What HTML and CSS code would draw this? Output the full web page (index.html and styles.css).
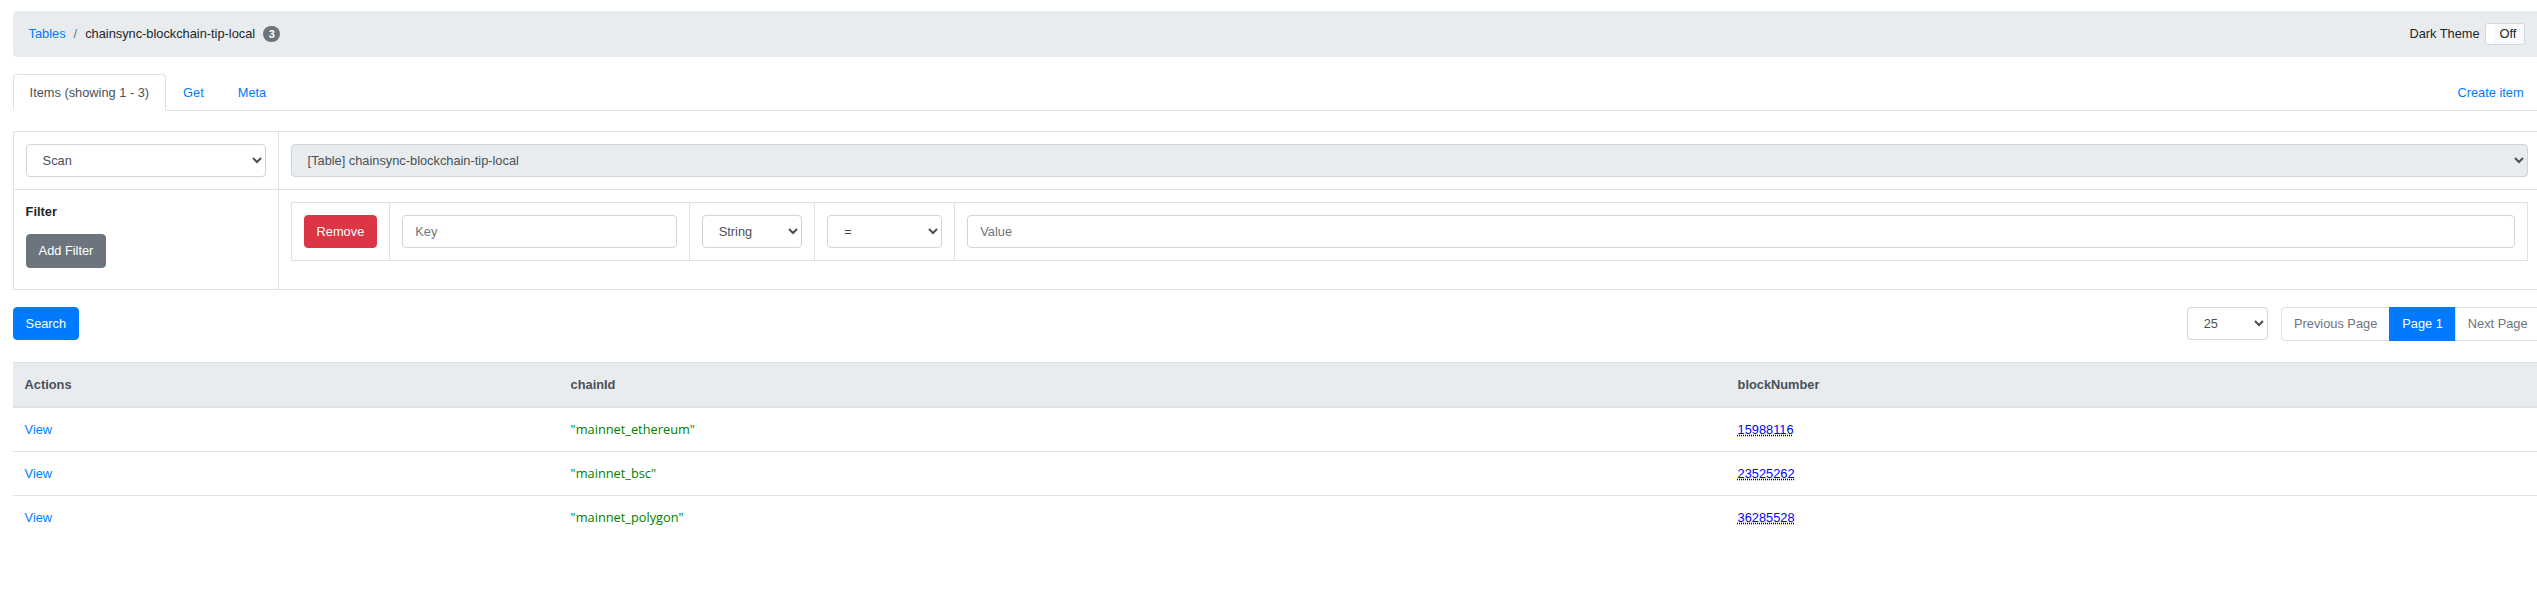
FILE: index.html
```html
<!DOCTYPE html>
<html lang="en">
<head>
<meta charset="utf-8">
<title>chainsync-blockchain-tip-local</title>
<link rel="stylesheet" href="styles.css">
</head>
<body>
<div class="page">
  <nav class="crumbs">
    <div class="crumb-list">
      <a class="crumb-link" href="#">Tables</a>
      <span class="crumb-sep">/</span>
      <span class="crumb-current">chainsync-blockchain-tip-local</span>
      <span class="badge">3</span>
    </div>
    <div class="theme">
      <span class="theme-label">Dark Theme</span>
      <span class="toggle">Off</span>
    </div>
  </nav>

  <div class="tabs">
    <a class="tab tab-active" href="#">Items (showing 1 - 3)</a>
    <a class="tab" href="#">Get</a>
    <a class="tab" href="#">Meta</a>
    <a class="tab tab-create" href="#">Create item</a>
  </div>

  <div class="query">
    <div class="qcell">
      <select class="control">
        <option>Scan</option>
        <option>Query</option>
      </select>
    </div>
    <div class="qcell">
      <select class="control" disabled>
        <option>[Table] chainsync-blockchain-tip-local</option>
      </select>
    </div>
    <div class="qcell">
      <div class="filter-label">Filter</div>
      <button class="btn btn-secondary" type="button">Add Filter</button>
    </div>
    <div class="qcell">
      <div class="filter-row">
        <div class="fcell"><button class="btn btn-danger" type="button">Remove</button></div>
        <div class="fcell"><input class="control key-input" type="text" placeholder="Key"></div>
        <div class="fcell">
          <select class="control type-select"><option>String</option><option>Number</option></select>
        </div>
        <div class="fcell">
          <select class="control op-select"><option>=</option><option>!=</option></select>
        </div>
        <div class="fcell fcell-grow"><input class="control" type="text" placeholder="Value"></div>
      </div>
    </div>
  </div>

  <div class="search-row">
    <button class="btn btn-primary" type="button">Search</button>
    <div class="paging">
      <select class="control page-size"><option>25</option><option>50</option></select>
      <div class="pagination">
        <span class="page-link">Previous Page</span>
        <span class="page-link page-active">Page 1</span>
        <span class="page-link">Next Page</span>
      </div>
    </div>
  </div>

  <table class="items">
    <colgroup>
      <col class="col-actions">
      <col class="col-chain">
      <col>
    </colgroup>
    <thead>
      <tr><th>Actions</th><th>chainId</th><th>blockNumber</th></tr>
    </thead>
    <tbody>
      <tr>
        <td><a href="#">View</a></td>
        <td><span class="v-str">"mainnet_ethereum"</span></td>
        <td><a class="v-num" href="#">15988116</a></td>
      </tr>
      <tr>
        <td><a href="#">View</a></td>
        <td><span class="v-str">"mainnet_bsc"</span></td>
        <td><a class="v-num" href="#">23525262</a></td>
      </tr>
      <tr>
        <td><a href="#">View</a></td>
        <td><span class="v-str">"mainnet_polygon"</span></td>
        <td><a class="v-num" href="#">36285528</a></td>
      </tr>
    </tbody>
  </table>
</div>
</body>
</html>
```

FILE: styles.css
```css
*, *::before, *::after { box-sizing: border-box; }

html, body {
  margin: 0;
  overflow: hidden;
  background: #fff;
}

body {
  font-family: "Liberation Sans", Arial, sans-serif;
  font-size: 12.8px;
  line-height: 1.5;
  color: #212529;
}

a { color: #007bff; text-decoration: none; }

.page {
  width: 2528px;
  margin-left: 12.6px;
  padding-top: 11px;
}

/* breadcrumb */
.crumbs {
  display: flex;
  align-items: center;
  justify-content: space-between;
  background: #e9ecef;
  border-radius: 4px;
  padding: 12px 16px;
  margin-bottom: 16.5px;
}
.crumb-list { display: flex; align-items: center; }
.crumb-sep { color: #6c757d; padding: 0 8px; }
.crumb-current { color: #212529; }
.badge {
  display: inline-block;
  margin-left: 8px;
  background: #6c757d;
  color: #fff;
  font-size: 11px;
  font-weight: 700;
  line-height: 1;
  padding: 2.5px 5.5px;
  border-radius: 10px;
}
.theme { display: flex; align-items: center; gap: 5px; }
.toggle {
  display: flex;
  align-items: center;
  width: 40px;
  height: 22px;
  padding: 0 6px 0 14px;
  border: 1px solid #d3d7db;
  border-radius: 3px;
  background: linear-gradient(to right, #fff 8px, #f8f9fa 8px);
  color: #212529;
}

/* tabs */
.tabs {
  display: flex;
  border-bottom: 1px solid #dee2e6;
}
.tab {
  padding: 8px 16px;
  border: 1px solid transparent;
  border-top-left-radius: 4px;
  border-top-right-radius: 4px;
  margin-bottom: -1px;
  color: #007bff;
}
.tab-active {
  color: #495057;
  background: #fff;
  border-color: #dee2e6 #dee2e6 #fff;
}
.tab-create { margin-left: auto; }

/* query form */
.query {
  margin-top: 20.5px;
  display: grid;
  grid-template-columns: 265px 1fr;
  border-top: 1px solid #dee2e6;
  border-left: 1px solid #dee2e6;
}
.qcell {
  padding: 12px;
  border-right: 1px solid #dee2e6;
  border-bottom: 1px solid #dee2e6;
}
.control {
  display: block;
  width: 100%;
  height: 33px;
  padding: 6px 12px;
  font: inherit;
  color: #495057;
  background-color: #fff;
  border: 1px solid #ced4da;
  border-radius: 4px;
}
.control::placeholder { color: #6c757d; opacity: 1; }
.control:disabled { background-color: #e9ecef; color: #495057; opacity: 1; }

.filter-label { font-weight: 700; margin-bottom: 13px; }

.filter-row {
  display: flex;
  border: 1px solid #dee2e6;
  margin-bottom: 16px;
}
.fcell {
  padding: 12px;
  border-right: 1px solid #dee2e6;
}
.fcell-grow { flex: 1; border-right: 0; }
.key-input { width: 274.5px; }
.type-select { width: 100.5px; }
.op-select { width: 115px; }

/* buttons */
.btn {
  display: inline-block;
  font: inherit;
  line-height: 1.5;
  padding: 6px 12px;
  border: 1px solid transparent;
  border-radius: 4px;
  color: #fff;
  cursor: pointer;
}
.btn-danger { background: #dc3545; border-color: #dc3545; }
.btn-secondary { background: #6c757d; border-color: #6c757d; }
.btn-primary { background: #007bff; border-color: #007bff; }

/* search row & paging */
.search-row {
  margin-top: 16.6px;
  display: flex;
  justify-content: space-between;
  align-items: flex-start;
}
.paging { display: flex; gap: 13px; align-items: flex-start; }
.page-size { width: 81.4px; }
.pagination { display: flex; }
.page-link {
  display: block;
  padding: 8px 12px;
  line-height: 1.25;
  border: 1px solid #dee2e6;
  margin-left: -1px;
  color: #6c757d;
  background: #fff;
}
.page-link:first-child { margin-left: 0; border-radius: 4px 0 0 4px; }
.page-link:last-child { border-radius: 0 4px 4px 0; }
.page-active { background: #007bff; border-color: #007bff; color: #fff; }

/* items table */
.items {
  margin-top: 20.8px;
  width: 100%;
  border-collapse: collapse;
  table-layout: fixed;
}
.col-actions { width: 546px; }
.col-chain { width: 1167px; }
.items th {
  text-align: left;
  padding: 12px;
  background: #e9ecef;
  color: #495057;
  font-weight: 700;
  border-top: 1px solid #dee2e6;
  border-bottom: 2px solid #dee2e6;
}
.items td {
  padding: 12px;
  border-top: 1px solid #dee2e6;
}
.v-str { color: #008000; font-family: "Open Sans", sans-serif; }
.v-num {
  color: #0000ff;
  text-decoration: underline dotted #000;
}
```
